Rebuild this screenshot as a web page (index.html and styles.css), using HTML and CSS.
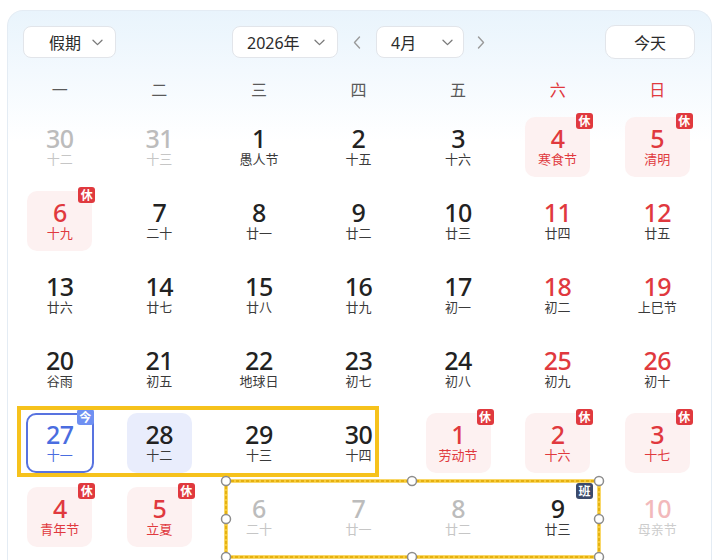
FILE: index.html
```html
<!DOCTYPE html>
<html lang="zh-CN">
<head>
<meta charset="utf-8">
<title>日历</title>
<link rel="stylesheet" href="styles.css">
</head>
<body>
<div class="card">
  <div class="header">
    <div class="select sel-holiday"><span>假期</span><svg class="chev" width="11" height="7" viewBox="0 0 11 7"><path d="M1 1.2 L5.5 5.6 L10 1.2"/></svg></div>
    <div class="select sel-year"><span>2026年</span><svg class="chev" width="11" height="7" viewBox="0 0 11 7"><path d="M1 1.2 L5.5 5.6 L10 1.2"/></svg></div>
    <div class="arrow"><svg width="8" height="13" viewBox="0 0 8 13"><path d="M6.5 1 L1.5 6.5 L6.5 12"/></svg></div>
    <div class="select sel-month"><span>4月</span><svg class="chev" width="11" height="7" viewBox="0 0 11 7"><path d="M1 1.2 L5.5 5.6 L10 1.2"/></svg></div>
    <div class="arrow arrow-next"><svg width="8" height="13" viewBox="0 0 8 13"><path d="M1.5 1 L6.5 6.5 L1.5 12"/></svg></div>
    <div class="today-btn">今天</div>
  </div>
  <div class="weekdays">
    <span>一</span><span>二</span><span>三</span><span>四</span><span>五</span><span class="we">六</span><span class="we">日</span>
  </div>
  <div class="grid">
    <div class="day"><div class="cell other"><span class="num">30</span><span class="lunar">十二</span></div></div>
    <div class="day"><div class="cell other"><span class="num">31</span><span class="lunar">十三</span></div></div>
    <div class="day"><div class="cell"><span class="num">1</span><span class="lunar">愚人节</span></div></div>
    <div class="day"><div class="cell"><span class="num">2</span><span class="lunar">十五</span></div></div>
    <div class="day"><div class="cell"><span class="num">3</span><span class="lunar">十六</span></div></div>
    <div class="day"><div class="cell holiday"><span class="num">4</span><span class="lunar">寒食节</span><span class="badge">休</span></div></div>
    <div class="day"><div class="cell holiday"><span class="num">5</span><span class="lunar">清明</span><span class="badge">休</span></div></div>

    <div class="day"><div class="cell holiday"><span class="num">6</span><span class="lunar">十九</span><span class="badge">休</span></div></div>
    <div class="day"><div class="cell"><span class="num">7</span><span class="lunar">二十</span></div></div>
    <div class="day"><div class="cell"><span class="num">8</span><span class="lunar">廿一</span></div></div>
    <div class="day"><div class="cell"><span class="num">9</span><span class="lunar">廿二</span></div></div>
    <div class="day"><div class="cell"><span class="num">10</span><span class="lunar">廿三</span></div></div>
    <div class="day"><div class="cell weekend"><span class="num">11</span><span class="lunar">廿四</span></div></div>
    <div class="day"><div class="cell weekend"><span class="num">12</span><span class="lunar">廿五</span></div></div>

    <div class="day"><div class="cell"><span class="num">13</span><span class="lunar">廿六</span></div></div>
    <div class="day"><div class="cell"><span class="num">14</span><span class="lunar">廿七</span></div></div>
    <div class="day"><div class="cell"><span class="num">15</span><span class="lunar">廿八</span></div></div>
    <div class="day"><div class="cell"><span class="num">16</span><span class="lunar">廿九</span></div></div>
    <div class="day"><div class="cell"><span class="num">17</span><span class="lunar">初一</span></div></div>
    <div class="day"><div class="cell weekend"><span class="num">18</span><span class="lunar">初二</span></div></div>
    <div class="day"><div class="cell weekend"><span class="num">19</span><span class="lunar">上巳节</span></div></div>

    <div class="day"><div class="cell"><span class="num">20</span><span class="lunar">谷雨</span></div></div>
    <div class="day"><div class="cell"><span class="num">21</span><span class="lunar">初五</span></div></div>
    <div class="day"><div class="cell"><span class="num">22</span><span class="lunar">地球日</span></div></div>
    <div class="day"><div class="cell"><span class="num">23</span><span class="lunar">初七</span></div></div>
    <div class="day"><div class="cell"><span class="num">24</span><span class="lunar">初八</span></div></div>
    <div class="day"><div class="cell weekend"><span class="num">25</span><span class="lunar">初九</span></div></div>
    <div class="day"><div class="cell weekend"><span class="num">26</span><span class="lunar">初十</span></div></div>

    <div class="day"><div class="cell today"><span class="num">27</span><span class="lunar">十一</span><span class="badge badge-today">今</span></div></div>
    <div class="day"><div class="cell selected"><span class="num">28</span><span class="lunar">十二</span></div></div>
    <div class="day"><div class="cell"><span class="num">29</span><span class="lunar">十三</span></div></div>
    <div class="day"><div class="cell"><span class="num">30</span><span class="lunar">十四</span></div></div>
    <div class="day"><div class="cell holiday"><span class="num">1</span><span class="lunar">劳动节</span><span class="badge">休</span></div></div>
    <div class="day"><div class="cell holiday"><span class="num">2</span><span class="lunar">十六</span><span class="badge">休</span></div></div>
    <div class="day"><div class="cell holiday"><span class="num">3</span><span class="lunar">十七</span><span class="badge">休</span></div></div>

    <div class="day"><div class="cell holiday"><span class="num">4</span><span class="lunar">青年节</span><span class="badge">休</span></div></div>
    <div class="day"><div class="cell holiday"><span class="num">5</span><span class="lunar">立夏</span><span class="badge">休</span></div></div>
    <div class="day"><div class="cell other"><span class="num">6</span><span class="lunar">二十</span></div></div>
    <div class="day"><div class="cell other"><span class="num">7</span><span class="lunar">廿一</span></div></div>
    <div class="day"><div class="cell other"><span class="num">8</span><span class="lunar">廿二</span></div></div>
    <div class="day"><div class="cell"><span class="num">9</span><span class="lunar">廿三</span><span class="badge badge-work">班</span></div></div>
    <div class="day"><div class="cell other other-weekend"><span class="num">10</span><span class="lunar">母亲节</span></div></div>
  </div>
</div>

<svg class="overlay" width="720" height="560" viewBox="0 0 720 560">
  <rect x="19" y="408" width="358" height="67" class="sel-solid"/>
  <rect x="226" y="481" width="373" height="76" class="sel-dash-base"/>
  <rect x="226" y="481" width="373" height="76" class="sel-dash"/>
  <circle cx="226" cy="481" r="4.5" class="handle"/>
  <circle cx="412" cy="481" r="4.5" class="handle"/>
  <circle cx="599" cy="481" r="4.5" class="handle"/>
  <circle cx="226" cy="519" r="4.5" class="handle"/>
  <circle cx="599" cy="519" r="4.5" class="handle"/>
  <circle cx="226" cy="557" r="4.5" class="handle"/>
  <circle cx="412" cy="557" r="4.5" class="handle"/>
  <circle cx="599" cy="557" r="4.5" class="handle"/>
</svg>
</body>
</html>
```
FILE: styles.css
```css
html, body {
  margin: 0;
  padding: 0;
}
body {
  width: 720px;
  height: 560px;
  overflow: hidden;
  position: relative;
  background: #ffffff;
  font-family: "Noto Sans", "Noto Sans CJK SC", sans-serif;
  color: #222;
}

.card {
  margin: 10px 0 0 7px;
  width: 705px;
  height: 560px;
  box-sizing: border-box;
  border: 1px solid #e4ecf4;
  border-bottom: none;
  border-radius: 16px 16px 0 0;
  background: linear-gradient(180deg, #e9f4fc 0px, #f3f9fe 60px, #ffffff 130px);
  padding-top: 14px;
}

/* header */
.header {
  display: flex;
  align-items: center;
  height: 34px;
  padding: 0 16px 0 15px;
}
.select {
  height: 32px;
  box-sizing: border-box;
  border: 1px solid #e2e5ea;
  border-radius: 8px;
  background: #ffffff;
  display: flex;
  align-items: center;
  justify-content: space-between;
  font-family: "Noto Sans", "Noto Sans CJK SC", sans-serif;
  font-size: 16px;
  color: #2b2b2b;
}
.chev path {
  fill: none;
  stroke: #7a7a7a;
  stroke-width: 1.3;
  stroke-linecap: round;
  stroke-linejoin: round;
}
.sel-holiday {
  width: 93px;
  padding: 0 12px 0 25px;
}
.sel-year {
  width: 106px;
  margin-left: 116px;
  padding: 0 12px 0 14px;
}
.sel-month {
  width: 88px;
  padding: 0 10px 0 14px;
}
.arrow {
  width: 38px;
  height: 32px;
  display: flex;
  align-items: center;
  justify-content: center;
}
.arrow path {
  fill: none;
  stroke: #9a9a9a;
  stroke-width: 1.4;
  stroke-linecap: round;
  stroke-linejoin: round;
}
.arrow-next {
  width: 34px;
}
.today-btn {
  margin-left: auto;
  width: 90px;
  height: 34px;
  box-sizing: border-box;
  border: 1px solid #e2e5ea;
  border-radius: 10px;
  background: #ffffff;
  display: flex;
  align-items: center;
  justify-content: center;
  font-size: 16px;
  color: #2b2b2b;
}

/* weekdays */
.weekdays {
  margin: 13px 4px 0 2px;
  display: grid;
  grid-template-columns: repeat(7, 1fr);
  height: 36px;
  line-height: 36px;
  text-align: center;
  font-size: 16px;
  color: #5a5a5a;
}
.weekdays .we {
  color: #e0393e;
}

/* grid */
.grid {
  margin: 2px 4px 0 2px;
  display: grid;
  grid-template-columns: repeat(7, 1fr);
  grid-auto-rows: 74px;
}
.day {
  display: flex;
  justify-content: center;
  align-items: flex-start;
  padding-top: 7px;
}
.cell {
  position: relative;
  width: 65px;
  height: 60px;
  box-sizing: border-box;
  border-radius: 10px;
  display: flex;
  flex-direction: column;
  align-items: center;
  justify-content: center;
  gap: 2px;
}
.num {
  font-size: 25px;
  line-height: 22px;
  font-weight: 500;
  letter-spacing: -0.5px;
  color: #222;
}
.lunar {
  font-size: 13px;
  line-height: 16px;
  color: #3a3a3a;
}

.other .num { color: #bcbcbc; }
.other .lunar { color: #c6c6c6; }
.other-weekend .num { color: #f2b9bb; }
.other-weekend .lunar { color: #cdcdcd; }

.weekend .num { color: #e0393e; }

.holiday {
  background: #fdf1f1;
}
.holiday .num,
.holiday .lunar {
  color: #e0393e;
}

.today {
  width: 68px;
  border: 2px solid #5873e0;
}
.today .num,
.today .lunar {
  color: #4a6de0;
}
.selected {
  background: #e9edfc;
}

.badge {
  position: absolute;
  top: -4px;
  right: -3px;
  width: 17px;
  height: 16px;
  border-radius: 3px;
  background: #e0393e;
  color: #fff;
  font-size: 12px;
  line-height: 16px;
  font-weight: 700;
  text-align: center;
  font-family: "Noto Sans CJK SC", sans-serif;
}
.badge-today {
  top: -6px;
  right: -2px;
  background: #6f90f2;
}
.badge-work {
  background: #3b4a6b;
}

/* annotation overlay */
.overlay {
  position: absolute;
  left: 0;
  top: 0;
  pointer-events: none;
}
.sel-solid {
  fill: none;
  stroke: #f6c21c;
  stroke-width: 4;
}
.sel-dash-base {
  fill: none;
  stroke: #f7cb3a;
  stroke-width: 3.5;
}
.sel-dash {
  fill: none;
  stroke: #dfa800;
  stroke-width: 1.4;
  stroke-dasharray: 3 2;
}
.handle {
  fill: #ffffff;
  stroke: #8c8c8c;
  stroke-width: 1.5;
}
```
